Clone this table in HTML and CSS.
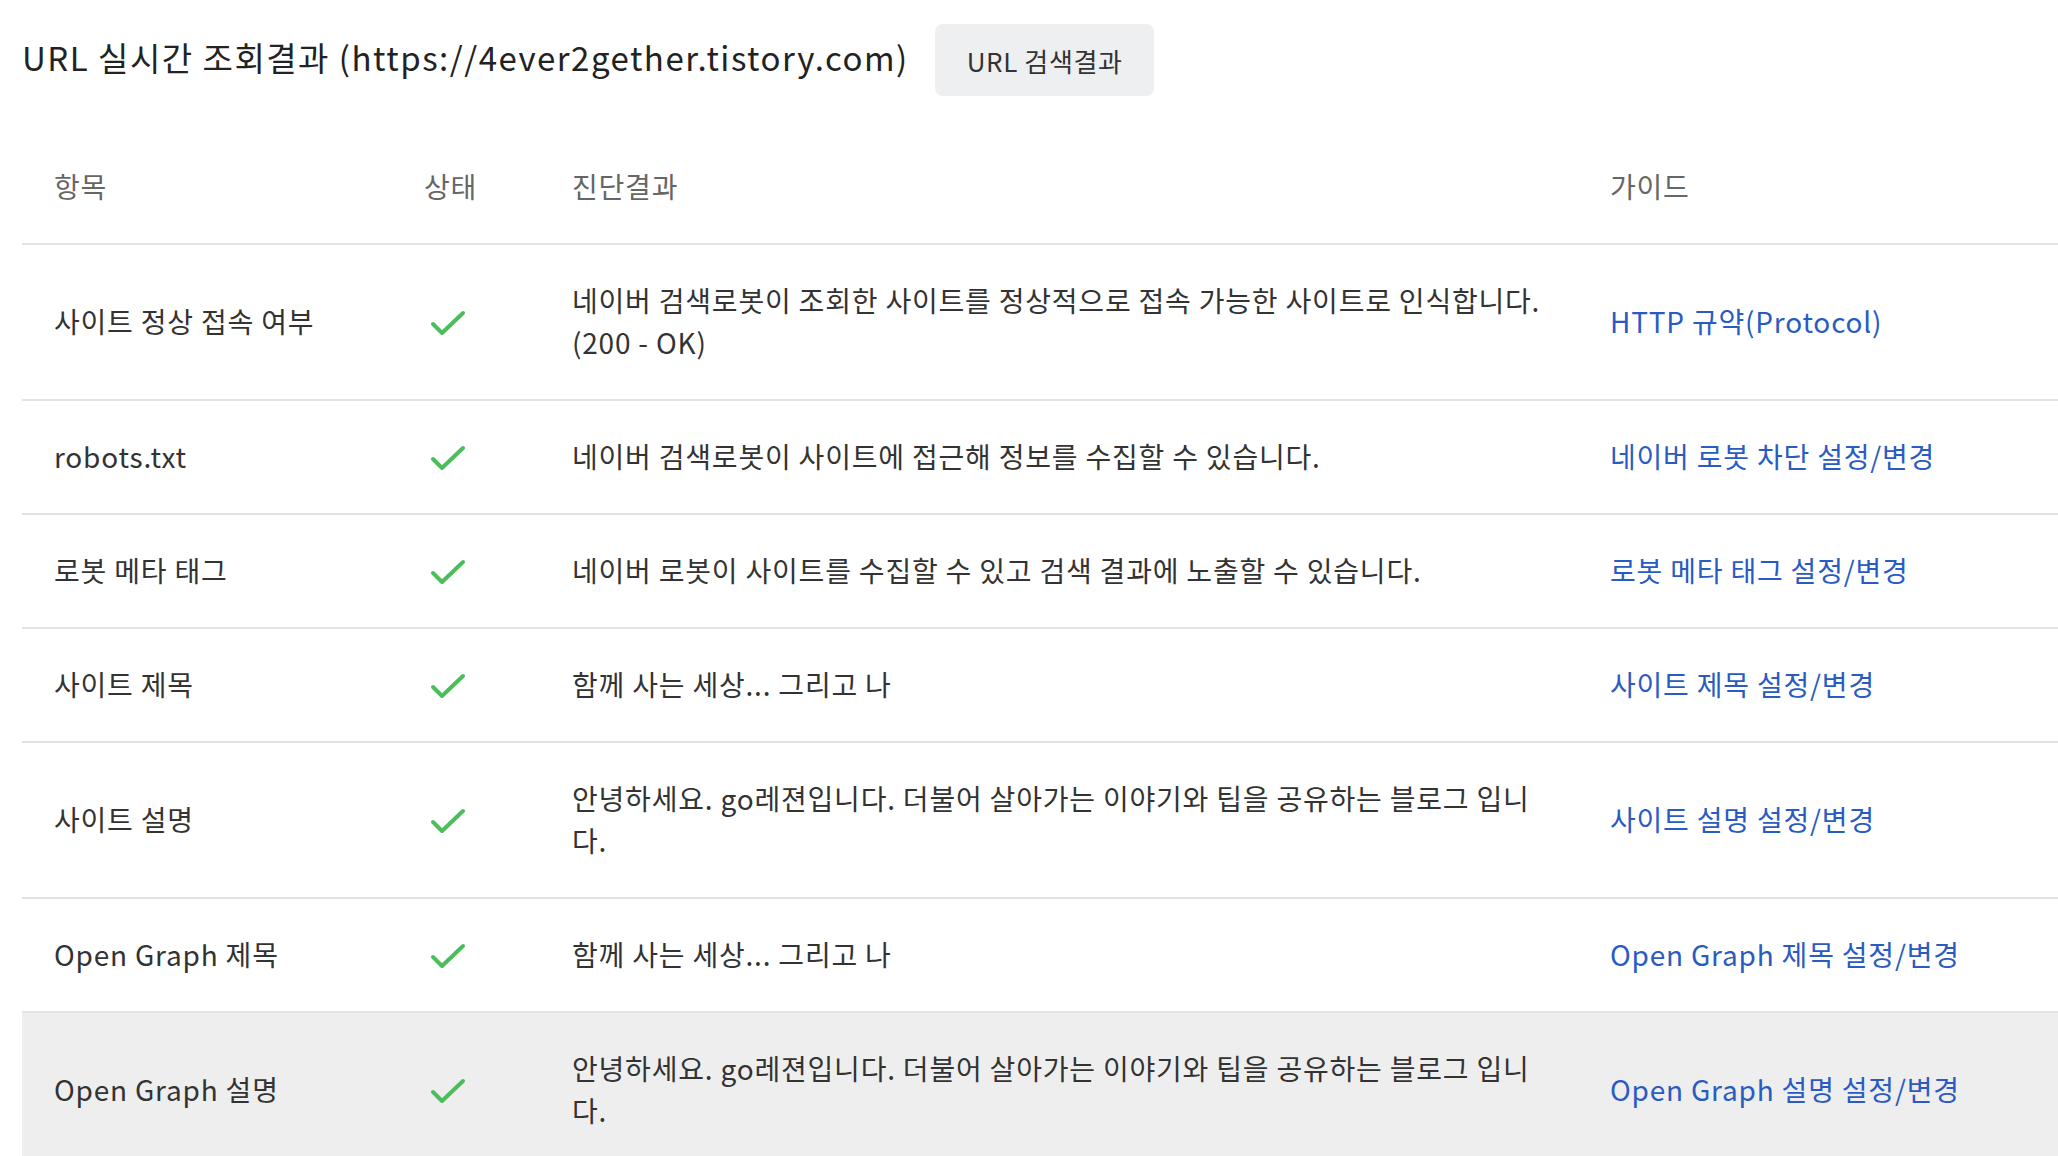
FILE: index.html
```
<!DOCTYPE html>
<html>

<head>
  <title>URL 실시간 조회결과</title>
  <meta charset="UTF-8">
  <meta name="viewport" content="width=device-width, initial-scale=1">
  <link rel="stylesheet" href="styles.css">
</head>

<body>
  <div class="title-bar">
    <h2 class="title">URL 실시간 조회결과 (https://4ever2gether.tistory.com)</h2>
    <button class="btn-result">URL 검색결과</button>
  </div>

  <table class="result-table">
    <colgroup>
      <col class="col-item">
      <col class="col-state">
      <col class="col-desc">
      <col class="col-guide">
    </colgroup>
    <thead>
      <tr>
        <th>항목</th>
        <th>상태</th>
        <th>진단결과</th>
        <th>가이드</th>
      </tr>
    </thead>
    <tbody>
      <tr>
        <td>사이트 정상 접속 여부</td>
        <td><svg class="check" viewBox="0 0 36 26"><polyline points="3,14 12,23 33,3"/></svg></td>
        <td>네이버 검색로봇이 조회한 사이트를 정상적으로 접속 가능한 사이트로 인식합니다.<br>(200 - OK)</td>
        <td><a href="#">HTTP 규약(Protocol)</a></td>
      </tr>
      <tr>
        <td>robots.txt</td>
        <td><svg class="check" viewBox="0 0 36 26"><polyline points="3,14 12,23 33,3"/></svg></td>
        <td>네이버 검색로봇이 사이트에 접근해 정보를 수집할 수 있습니다.</td>
        <td><a href="#">네이버 로봇 차단 설정/변경</a></td>
      </tr>
      <tr>
        <td>로봇 메타 태그</td>
        <td><svg class="check" viewBox="0 0 36 26"><polyline points="3,14 12,23 33,3"/></svg></td>
        <td>네이버 로봇이 사이트를 수집할 수 있고 검색 결과에 노출할 수 있습니다.</td>
        <td><a href="#">로봇 메타 태그 설정/변경</a></td>
      </tr>
      <tr>
        <td>사이트 제목</td>
        <td><svg class="check" viewBox="0 0 36 26"><polyline points="3,14 12,23 33,3"/></svg></td>
        <td>함께 사는 세상... 그리고 나</td>
        <td><a href="#">사이트 제목 설정/변경</a></td>
      </tr>
      <tr>
        <td>사이트 설명</td>
        <td><svg class="check" viewBox="0 0 36 26"><polyline points="3,14 12,23 33,3"/></svg></td>
        <td>안녕하세요. go레젼입니다. 더불어 살아가는 이야기와 팁을 공유하는 블로그 입니다.</td>
        <td><a href="#">사이트 설명 설정/변경</a></td>
      </tr>
      <tr>
        <td>Open Graph 제목</td>
        <td><svg class="check" viewBox="0 0 36 26"><polyline points="3,14 12,23 33,3"/></svg></td>
        <td>함께 사는 세상... 그리고 나</td>
        <td><a href="#">Open Graph 제목 설정/변경</a></td>
      </tr>
      <tr class="hover">
        <td>Open Graph 설명</td>
        <td><svg class="check" viewBox="0 0 36 26"><polyline points="3,14 12,23 33,3"/></svg></td>
        <td>안녕하세요. go레젼입니다. 더불어 살아가는 이야기와 팁을 공유하는 블로그 입니다.</td>
        <td><a href="#">Open Graph 설명 설정/변경</a></td>
      </tr>
    </tbody>
  </table>
</body>
</html>
```

FILE: styles.css
```
*{
  box-sizing:border-box;
}

html{
  overflow:hidden;
}

body{
  margin:0;
  padding:24px 0 0 22px;
  width:2120px;
  font-family:"Noto Sans CJK KR", "Noto Sans", sans-serif;
  color:#333;
  background:#fff;
}

.title-bar{
  display:flex;
  align-items:center;
  gap:26px;
}

.title{
  margin:0;
  padding-bottom:7px;
  font-size:33px;
  font-weight:400;
  color:#222;
  letter-spacing:1.5px;
}

.btn-result{
  height:72px;
  padding:0 32px;
  border:0;
  border-radius:8px;
  background:#eeeff1;
  font-family:inherit;
  font-size:26px;
  letter-spacing:0.6px;
  color:#333;
}

.result-table{
  width:2080px;
  margin-top:35px;
  border-collapse:collapse;
  table-layout:fixed;
  font-size:28px;
  letter-spacing:0.8px;
  line-height:42px;
}

.col-item{ width:370px; }
.col-state{ width:148px; }
.col-desc{ width:1038px; }
.col-guide{ width:524px; }

.result-table th,
.result-table td{
  padding:34px 24px 36px 32px;
  text-align:left;
  vertical-align:middle;
  border-bottom:2px solid #e3e3e3;
}

.result-table th{
  font-weight:400;
  color:#666;
}

.result-table td{
  color:#333;
}

.result-table tr.hover td{
  background:#eeeeee;
}

.result-table a{
  color:#2a5bc2;
  text-decoration:none;
}

.check{
  display:block;
  width:36px;
  height:26px;
  margin:2px 0 -2px 6px;
}
.check polyline{
  fill:none;
  stroke:#4cbd5b;
  stroke-width:4;
  stroke-linecap:round;
  stroke-linejoin:round;
}
```
